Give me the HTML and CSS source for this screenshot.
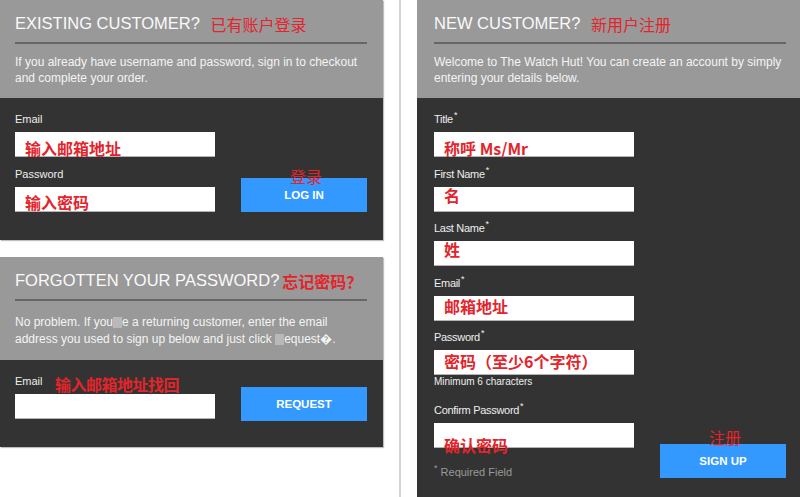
FILE: index.html
```html
<!DOCTYPE html>
<html lang="zh-CN">
<head>
    <meta charset="UTF-8">
    <meta name="viewport" content="width=device-width, initial-scale=1.0">
    <title>Customer Login</title>
    <link rel="stylesheet" href="styles.css">
</head>
<body>
    <div class="page">
        <div class="col">
            <!-- Existing customer -->
            <section class="box">
                <div class="box-head">
                    <h2 class="box-title">EXISTING CUSTOMER? <span class="cn">已有账户登录</span></h2>
                    <p class="box-text">If you already have username and password, sign in to checkout and complete your order.</p>
                </div>
                <div class="box-body">
                    <div class="form-row">
                        <div class="fields">
                            <label class="field-label">Email</label>
                            <div class="field"><span class="note">输入邮箱地址</span></div>
                            <label class="field-label">Password</label>
                            <div class="field last"><span class="note note-b">输入密码</span></div>
                        </div>
                        <button class="btn" type="button">LOG IN<span class="btn-note">登录</span></button>
                    </div>
                </div>
            </section>

            <!-- Forgotten password -->
            <section class="box box-forgot">
                <div class="box-head">
                    <h2 class="box-title">FORGOTTEN YOUR PASSWORD?<span class="cn cn-bold">忘记密码？</span></h2>
                    <p class="box-text">No problem. If you<span class="blot"></span>e a returning customer, enter the email address you used to sign up below and just click <span class="blot"></span>equest&#xFFFD;.</p>
                </div>
                <div class="box-body">
                    <div class="form-row row-request">
                        <div class="fields">
                            <label class="field-label">Email</label>
                            <span class="note-aside">输入邮箱地址找回</span>
                            <div class="field last"></div>
                        </div>
                        <button class="btn" type="button">REQUEST</button>
                    </div>
                </div>
            </section>
        </div>

        <div class="gutter"></div>

        <div class="col">
            <!-- New customer -->
            <section class="box box-right">
                <div class="box-head">
                    <h2 class="box-title">NEW CUSTOMER? <span class="cn">新用户注册</span></h2>
                    <p class="box-text">Welcome to The Watch Hut! You can create an account by simply entering your details below.</p>
                </div>
                <div class="box-body">
                    <div class="form-row">
                        <div class="fields">
                            <label class="field-label">Title<sup class="req">*</sup></label>
                            <div class="field"><span class="note">称呼 Ms/Mr</span></div>
                            <label class="field-label">First Name<sup class="req">*</sup></label>
                            <div class="field"><span class="note note-top">名</span></div>
                            <label class="field-label">Last Name<sup class="req">*</sup></label>
                            <div class="field"><span class="note note-top">姓</span></div>
                            <label class="field-label">Email<sup class="req">*</sup></label>
                            <div class="field"><span class="note note-mid">邮箱地址</span></div>
                            <label class="field-label">Password<sup class="req">*</sup></label>
                            <div class="field has-hint"><span class="note note-mid">密码（至少6个字符）</span></div>
                            <div class="hint">Minimum 6 characters</div>
                            <label class="field-label">Confirm Password<sup class="req">*</sup></label>
                            <div class="field has-hint"><span class="note note-low">确认密码</span></div>
                            <div class="required"><sup class="req">*</sup> Required Field</div>
                        </div>
                        <button class="btn" type="button">SIGN UP<span class="btn-note btn-note-high">注册</span></button>
                    </div>
                </div>
            </section>
        </div>
    </div>
</body>
</html>
```

FILE: styles.css
```css
/* General Reset */
body, html {
    margin: 0;
    padding: 0;
    height: 497px;
    overflow: hidden;
    background: #fff;
    font-family: "Liberation Sans", Arial, sans-serif;
}

.page {
    display: flex;
    align-items: flex-start;
}

.col {
    width: 383px;
    flex: none;
}

/* thin divider between the two columns */
.gutter {
    width: 34px;
    height: 497px;
    flex: none;
    display: flex;
    justify-content: center;
}

.gutter::before {
    content: "";
    width: 2px;
    background: #d4d4d4;
}

.box {
    box-shadow: 1px 1px 1px rgba(0, 0, 0, 0.25);
}

.box-forgot {
    margin-top: 17px;
}

.box-right {
    box-shadow: none;
}

.box-head {
    background: #999;
    padding: 13px 16px 12px 15px;
}

.box-right .box-head,
.box-right .box-body {
    padding-left: 17px;
    padding-right: 14px;
}

.box-title {
    margin: 0;
    padding-bottom: 9px;
    border-bottom: 2px solid #666;
    font-weight: normal;
    font-size: 16.5px;
    line-height: 20px;
    color: #fafafa;
}

.cn {
    margin-left: 6px;
    vertical-align: -2px;
    font-family: "Noto Sans CJK SC", sans-serif;
    font-size: 16px;
    line-height: 16px;
    color: #e3242b;
}

.cn-bold {
    margin-left: 3px;
    font-weight: bold;
}

.box-text {
    margin: 10px 0 0;
    font-size: 12px;
    line-height: 16px;
    color: #f4f4f4;
}

.box-forgot .box-text {
    margin-top: 13px;
    line-height: 17px;
}

/* blurred characters in the source copy */
.blot {
    display: inline-block;
    width: 9px;
    height: 11px;
    vertical-align: -2px;
    background: #b9b9b9;
}

.box-body {
    background: #333;
    padding: 14px 16px 28px 15px;
}

.form-row {
    display: flex;
    justify-content: space-between;
    align-items: flex-end;
}

.fields {
    position: relative;
    width: 200px;
}

.field-label {
    display: block;
    margin-bottom: 6px;
    font-size: 11px;
    line-height: 14px;
    color: #eee;
}

.box-right .field-label {
    letter-spacing: -0.3px;
}

.req {
    font-size: 9px;
    line-height: 0;
    vertical-align: 5px;
    margin-left: 1px;
    color: #eee;
}

.field {
    position: relative;
    height: 25px;
    margin-bottom: 10px;
    background: #fff;
    border-bottom: 1px solid #b3b3b3;
    box-sizing: border-box;
}

.box-right .field {
    margin-bottom: 9.5px;
}

.field.last,
.box-right .field.has-hint {
    margin-bottom: 0;
}

/* red annotations */
.note,
.note-aside,
.btn-note {
    position: absolute;
    font-family: "Noto Sans CJK SC", sans-serif;
    font-size: 16px;
    line-height: 16px;
    color: #e3242b;
    white-space: nowrap;
}

.note {
    left: 10px;
    top: 7.5px;
    font-weight: bold;
}

.note-b {
    top: 6.5px;
}

.note-top {
    top: 0;
}

.note-mid {
    top: 2.5px;
}

.note-low {
    top: 13.5px;
}

.note-aside {
    left: 40px;
    top: 2px;
    font-weight: bold;
    letter-spacing: -0.5px;
}

.hint {
    margin-top: 0.5px;
    margin-bottom: 15.5px;
    font-size: 10px;
    line-height: 12px;
    color: #eee;
}

.required {
    margin-top: 18px;
    font-size: 11px;
    line-height: 12px;
    color: #999;
}

.required .req {
    margin-left: 0;
    color: #999;
}

.btn {
    position: relative;
    width: 126px;
    height: 34px;
    padding: 0;
    border: none;
    background: #3399ff;
    color: #fff;
    font-family: "Liberation Sans", Arial, sans-serif;
    font-weight: bold;
    font-size: 11.5px;
    cursor: pointer;
}

.row-request .btn {
    margin-bottom: -2px;
}

.btn-note {
    left: 4px;
    right: 0;
    top: -10.5px;
    text-align: center;
    font-weight: normal;
}

.btn-note-high {
    top: -15.5px;
}
```
